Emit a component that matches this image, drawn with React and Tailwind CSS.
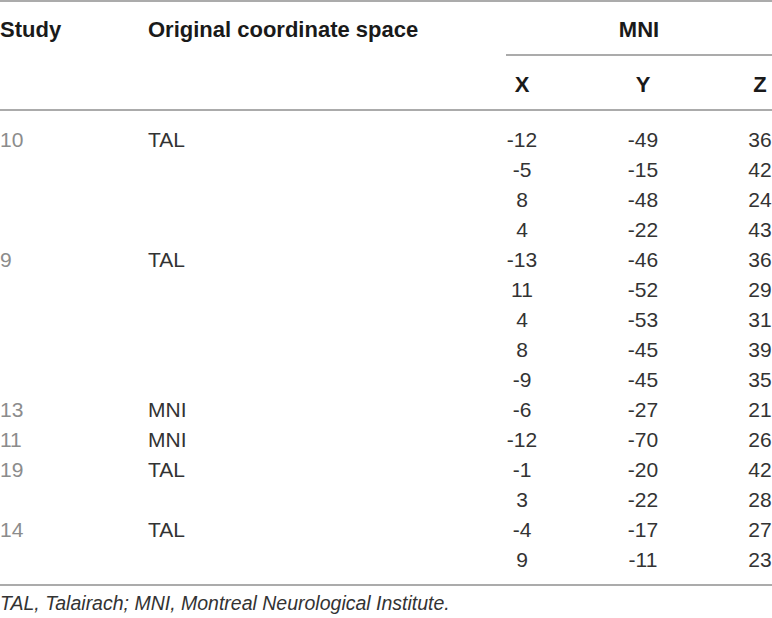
import React from 'react';

const rows = [
  { study: '10', space: 'TAL', x: '-12', y: '-49', z: '36' },
  { x: '-5', y: '-15', z: '42' },
  { x: '8', y: '-48', z: '24' },
  { x: '4', y: '-22', z: '43' },
  { study: '9', space: 'TAL', x: '-13', y: '-46', z: '36' },
  { x: '11', y: '-52', z: '29' },
  { x: '4', y: '-53', z: '31' },
  { x: '8', y: '-45', z: '39' },
  { x: '-9', y: '-45', z: '35' },
  { study: '13', space: 'MNI', x: '-6', y: '-27', z: '21' },
  { study: '11', space: 'MNI', x: '-12', y: '-70', z: '26' },
  { study: '19', space: 'TAL', x: '-1', y: '-20', z: '42' },
  { x: '3', y: '-22', z: '28' },
  { study: '14', space: 'TAL', x: '-4', y: '-17', z: '27' },
  { x: '9', y: '-11', z: '23' },
];

export default function App() {
  return (
    <div className="w-[772px] h-[618px] bg-white text-[#222] font-['Liberation_Sans',Arial,sans-serif] overflow-hidden">
      <div className="h-[2px] bg-[#ababab]" />

      {/* Header */}
      <div className="grid grid-cols-[148px_358px_1fr] text-[22px] font-bold text-[#1a1a1a]">
        <div className="pt-[16px] leading-6">Study</div>
        <div className="pt-[16px] leading-6">Original coordinate space</div>
        <div className="flex flex-col">
          <div className="pt-[16px] leading-6 text-center">MNI</div>
          <div className="mt-[12px] h-[2px] bg-[#ababab]" />
          <div className="mt-[17px] mb-[12px] grid grid-cols-[32px_210px_24px] leading-6 text-center">
            <div>X</div>
            <div>Y</div>
            <div>Z</div>
          </div>
        </div>
      </div>

      <div className="h-[2px] bg-[#ababab]" />

      {/* Body */}
      <div className="pt-[13px] pb-[10px] text-[21px] text-[#333]">
        {rows.map((r, i) => (
          <div key={i} className="grid grid-cols-[148px_358px_32px_210px_24px] h-[30px] items-center leading-none">
            <div className="text-[#8c8c8c]">{r.study || ''}</div>
            <div>{r.space || ''}</div>
            <div className="text-center whitespace-nowrap">{r.x}</div>
            <div className="text-center">{r.y}</div>
            <div className="text-center">{r.z}</div>
          </div>
        ))}
      </div>

      <div className="h-[2px] bg-[#ababab]" />

      <p className="pt-[5px] leading-6 text-[19.5px] italic text-[#333]">
        TAL, Talairach; MNI, Montreal Neurological Institute.
      </p>
    </div>
  );
}
